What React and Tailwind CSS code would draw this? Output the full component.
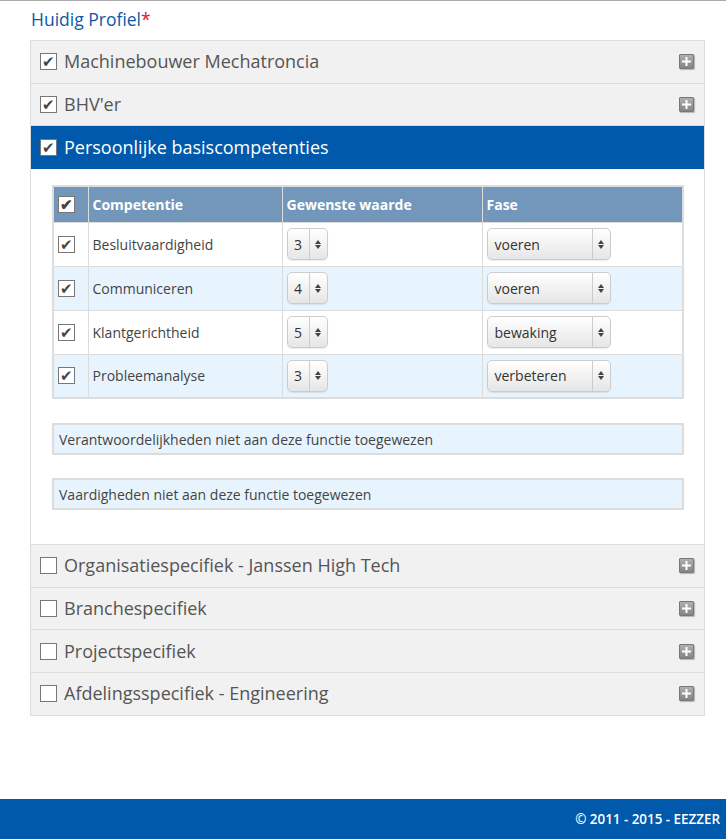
import { useState } from "react";

const font = { fontFamily: '"Open Sans", "Liberation Sans", sans-serif' };

const Check = ({ checked }) => (
    <span className="inline-flex w-[17px] h-[17px] items-center justify-center bg-white border border-[#777] shrink-0 text-[#444] text-[15px] leading-none">
        {checked ? "✔" : ""}
    </span>
);

const PlusIcon = () => (
    <span className="inline-flex w-[15px] h-[15px] items-center justify-center rounded-[1px] border border-[#777] bg-gradient-to-b from-[#b0b0b0] to-[#858585] shadow-[1px_1px_1px_rgba(0,0,0,0.25)]">
        <svg width="11" height="11" viewBox="0 0 11 11">
            <rect x="4.5" y="1" width="2" height="9" fill="#fff" />
            <rect x="1" y="4.5" width="9" height="2" fill="#fff" />
        </svg>
    </span>
);

const Select = ({ value, wide }) => (
    <div className={`flex items-stretch h-[32px] rounded-[5px] border border-[#ccc] bg-gradient-to-b from-white to-[#e6e6e6] shadow-[0_1px_1px_rgba(0,0,0,0.08)] ${wide ? "w-[124px]" : "w-[41px]"}`}>
        <span className={`flex items-center text-[14px] text-[#333] ${wide ? "flex-1 pl-[7px]" : "w-[21px] justify-center"}`}>{value}</span>
        <span className="flex w-[18px] flex-col items-center justify-center border-l border-[#ccc] gap-[1px]">
            <svg width="6" height="4" viewBox="0 0 6 4"><path d="M3 0 L6 4 L0 4 Z" fill="#444" /></svg>
            <svg width="6" height="4" viewBox="0 0 6 4"><path d="M0 0 L6 0 L3 4 Z" fill="#444" /></svg>
        </span>
    </div>
);

const AccordionRow = ({ title, checked }) => (
    <div className="flex items-center h-[42.7px] bg-[#f1f1f1] border-b border-[#dcdcdc] pl-[9px] pr-[10px]">
        <Check checked={checked} />
        <span className="ml-[7px] text-[18px] text-[#555] flex-1">{title}</span>
        <PlusIcon />
    </div>
);

export default function App() {
    const [rows] = useState([
        { name: "Besluitvaardigheid", value: "3", fase: "voeren" },
        { name: "Communiceren", value: "4", fase: "voeren" },
        { name: "Klantgerichtheid", value: "5", fase: "bewaking" },
        { name: "Probleemanalyse", value: "3", fase: "verbeteren" },
    ]);

    return (
        <div className="min-h-[839px] flex flex-col bg-white border-t border-[#aaa]" style={font}>
            <div className="flex-1 pl-[30px] pr-[21px]">
                <h2 className="pt-[6px] pb-[9px] pl-[1px] text-[17.5px] leading-[24px] text-[#0a5aa8]">
                    Huidig Profiel<span className="text-[#e8141b]">*</span>
                </h2>
                <div className="border-l border-r border-t border-[#dcdcdc]">
                    <AccordionRow title="Machinebouwer Mechatroncia" checked />
                    <AccordionRow title="BHV'er" checked />
                    <div className="flex items-center h-[42.7px] bg-[#0059ab] pl-[9px]">
                        <Check checked />
                        <span className="ml-[7px] text-[18px] text-white">Persoonlijke basiscompetenties</span>
                    </div>
                    <div className="bg-white border-b border-[#dcdcdc] pt-[16px] pb-[34px] pl-[21px] pr-[20px]">
                        <table className="w-full border-collapse border-2 border-[#dcdcdc] text-[14px] text-[#444]">
                            <thead>
                                <tr className="bg-[#7397bb] h-[36px] text-white text-left">
                                    <th className="w-[35px] border-r border-[#dcdcdc] pl-[4px]"><Check checked /></th>
                                    <th className="w-[194px] border-r border-[#dcdcdc] pl-[4px] font-bold">Competentie</th>
                                    <th className="w-[200px] border-r border-[#dcdcdc] pl-[4px] font-bold">Gewenste waarde</th>
                                    <th className="pl-[4px] font-bold">Fase</th>
                                </tr>
                            </thead>
                            <tbody>
                                {rows.map((r, i) => (
                                    <tr key={r.name} className={`h-[44px] border-t border-[#dcdcdc] ${i % 2 ? "bg-[#e8f4fd]" : "bg-white"}`}>
                                        <td className="border-r border-[#dcdcdc] pl-[4px]"><Check checked /></td>
                                        <td className="border-r border-[#dcdcdc] pl-[4px]">{r.name}</td>
                                        <td className="border-r border-[#dcdcdc] pl-[4px]"><Select value={r.value} /></td>
                                        <td className="pl-[4px]"><Select value={r.fase} wide /></td>
                                    </tr>
                                ))}
                            </tbody>
                        </table>
                        <div className="mt-[24px] h-[32px] flex items-center px-[5px] bg-[#e8f4fd] border-2 border-[#dcdcdc] text-[14px] text-[#444]">
                            Verantwoordelijkheden niet aan deze functie toegewezen
                        </div>
                        <div className="mt-[23px] h-[32px] flex items-center px-[5px] bg-[#e8f4fd] border-2 border-[#dcdcdc] text-[14px] text-[#444]">
                            Vaardigheden niet aan deze functie toegewezen
                        </div>
                    </div>
                    <AccordionRow title="Organisatiespecifiek - Janssen High Tech" />
                    <AccordionRow title="Branchespecifiek" />
                    <AccordionRow title="Projectspecifiek" />
                    <AccordionRow title="Afdelingsspecifiek - Engineering" />
                </div>
            </div>
            <footer className="h-[40px] bg-[#0059ab] flex items-center justify-end pr-[6px] text-white text-[13.4px] font-semibold">
                © 2011 - 2015 - EEZZER
            </footer>
        </div>
    );
}
